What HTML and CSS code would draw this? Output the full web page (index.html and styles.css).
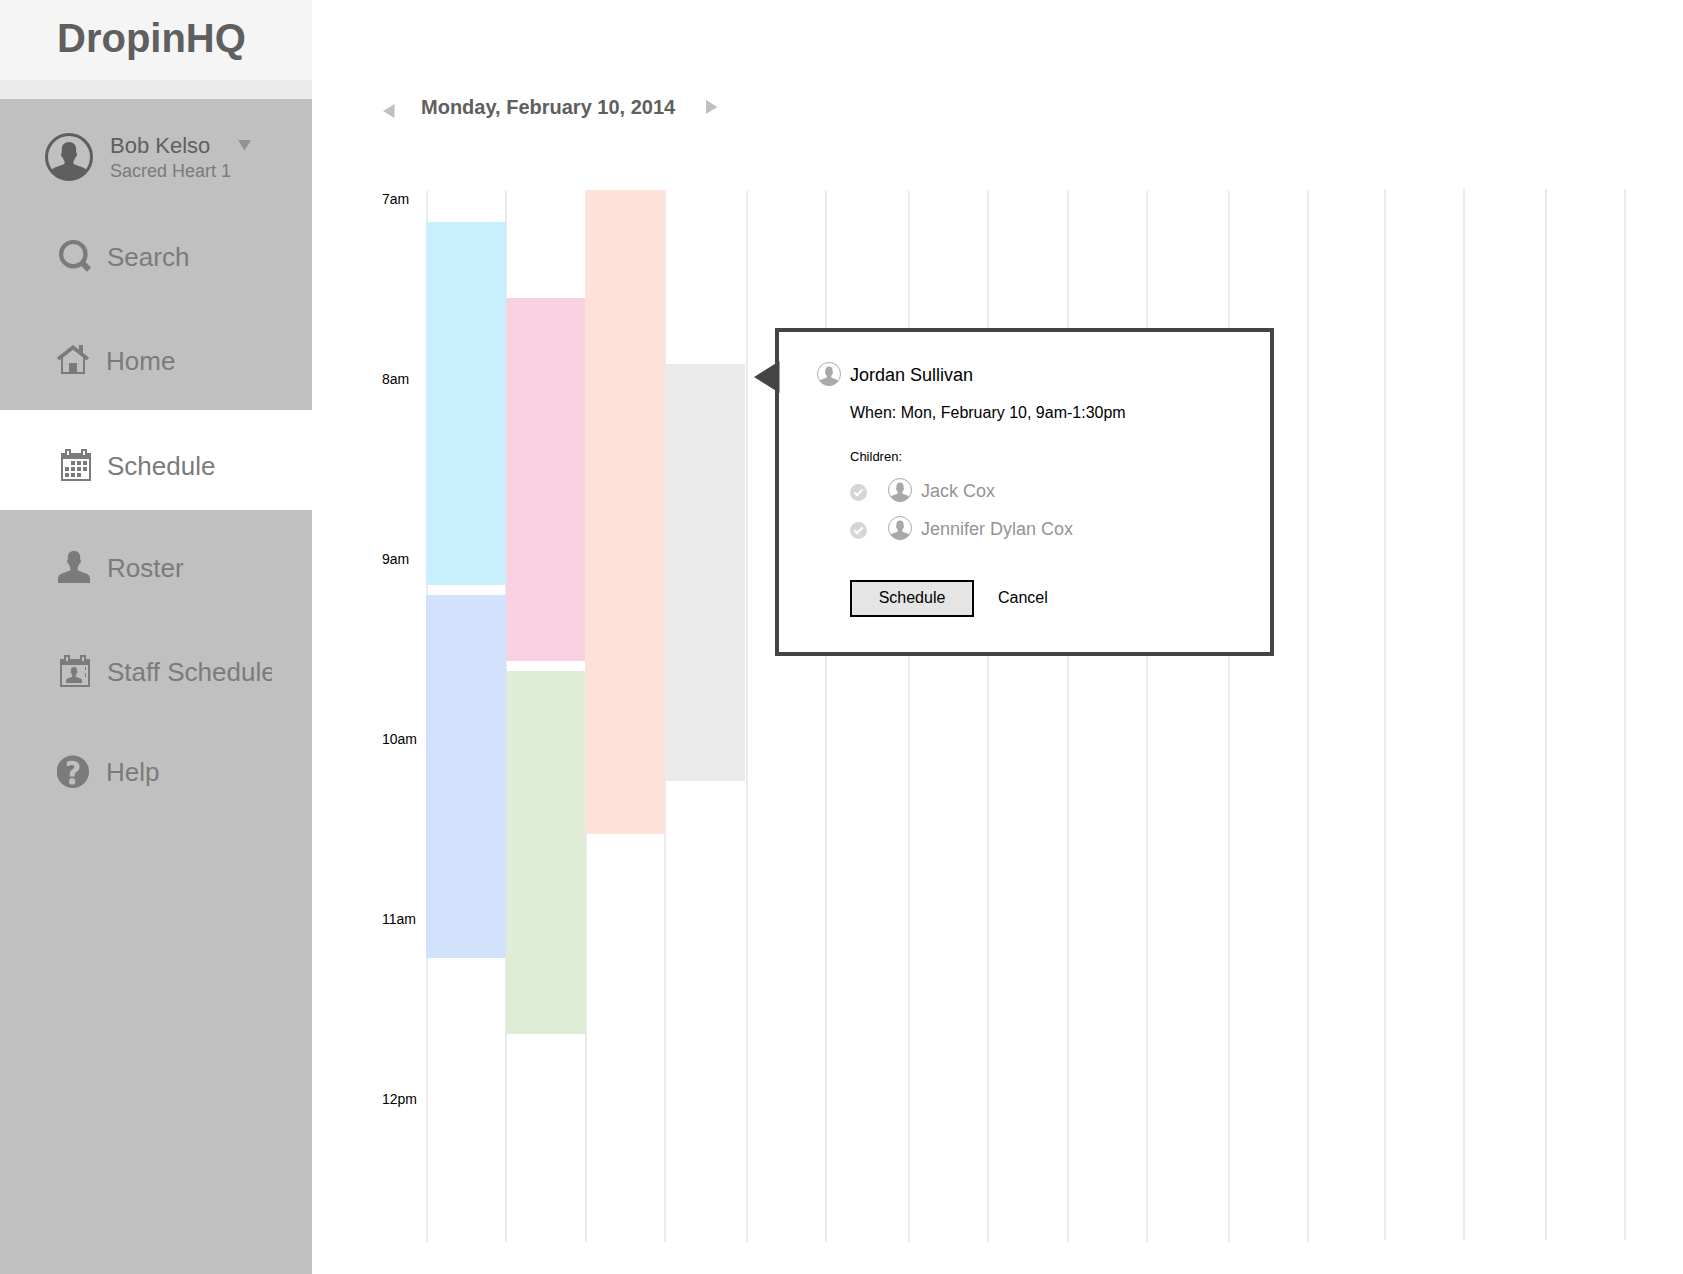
FILE: index.html
```html
<!DOCTYPE html>
<html lang="en">
<head>
  <meta charset="utf-8">
  <meta name="viewport" content="width=device-width, initial-scale=1">
  <title>DropinHQ – Schedule</title>
  <link rel="stylesheet" href="styles.css">
</head>
<body>
  <svg class="sprite" aria-hidden="true">
    <symbol id="person" viewBox="0 0 32 32">
      <path d="M16 0C20 0 22.3 2.4 22.2 6.5L22.1 8.4C23 8.4 23 9.5 22.8 10.7C22.5 12.2 22 12.9 21.2 13C20.9 14.5 20.2 15.6 19.6 16.4V18.8C19.7 19.5 20.2 19.7 21.2 20.1L28 22.6C31 23.8 32 25 32 28.5V32H0V28.5C0 25 1 23.8 4 22.6L10.8 20.1C11.8 19.7 12.3 19.5 12.4 18.8V16.4C11.8 15.6 11.1 14.5 10.8 13C10 12.9 9.5 12.2 9.2 10.7C9 9.5 9 8.4 9.9 8.4L9.8 6.5C9.7 2.4 12 0 16 0Z"/>
    </symbol>
    <clipPath id="face"><circle cx="24" cy="24" r="23"/></clipPath>
    <symbol id="avatar" viewBox="0 0 48 48">
      <g clip-path="url(#face)">
        <path d="M24 9C28.6 9 31.4 12 31.2 17L31.1 19.4C32 19.4 32.1 20.6 31.9 22C31.6 23.6 31 24.4 30.2 24.6C29.8 26.2 29.2 27.4 28.4 28.4V30C28.6 31 29.2 31.4 30.4 31.8L38 34.6C40.6 35.8 42.4 37.2 45 40V48H3V40C5.6 37.2 7.4 35.8 10 34.6L17.6 31.8C18.8 31.4 19.4 31 19.6 30V28.4C18.8 27.4 18.2 26.2 17.8 24.6C17 24.4 16.4 23.6 16.1 22C15.9 20.6 16 19.4 16.9 19.4L16.8 17C16.6 12 19.4 9 24 9Z"/>
      </g>
    </symbol>
  </svg>

  <div class="app">
    <aside class="sidebar">
      <h1 class="brand">DropinHQ</h1>

      <div class="account">
        <svg class="avatar avatar-large" viewBox="0 0 48 48" aria-hidden="true"><use href="#avatar"/><circle class="ring" cx="24" cy="24" r="22.5"/></svg>
        <div class="account-text">
          <div class="account-name">
            <span>Bob Kelso</span>
            <button class="icon-button caret" type="button" aria-label="Account menu">
              <svg width="13" height="11" viewBox="0 0 13 11"><path d="M0 0H13L6.5 10.5Z"/></svg>
            </button>
          </div>
          <div class="account-site">Sacred Heart 1</div>
        </div>
      </div>

      <nav class="nav">
        <a class="nav-item nav-wide" href="#search">
          <svg class="nav-icon" viewBox="0 0 34 34"><circle cx="16.3" cy="14.2" r="12.2" fill="none" stroke="currentColor" stroke-width="4.2"/><path d="M24.8 22.4L32 29.7" stroke="currentColor" stroke-width="6"/></svg>
          <span class="nav-label">Search</span>
        </a>
        <a class="nav-item" href="#home">
          <svg class="nav-icon" viewBox="0 0 34 34"><path d="M16 1L22 5.8V1H26V8.8L32 13.4L29.8 16.4L16 5.7L2.2 16.4L0 13.4Z"/><path d="M4 14L6 12.8V28H12V19H20V28H26V12.8L28 14V30H4Z"/></svg>
          <span class="nav-label">Home</span>
        </a>
        <a class="nav-item nav-wide nav-compact nav-active" href="#schedule" aria-current="page">
          <svg class="nav-icon" viewBox="0 0 34 34"><path fill-rule="evenodd" d="M4 4H8V0H14V4H24V0H30V4H34V32H4ZM10 2V6H12V2ZM26 2V6H28V2ZM6 10V30H32V10Z"/><path d="M14 12h4v4h-4zM20 12h4v4h-4zM26 12h4v4h-4zM8 18h4v4h-4zM14 18h4v4h-4zM20 18h4v4h-4zM26 18h4v4h-4zM8 24h4v4h-4zM14 24h4v4h-4zM20 24h4v4h-4z"/></svg>
          <span class="nav-label">Schedule</span>
        </a>
        <a class="nav-item nav-wide nav-lower" href="#roster">
          <svg class="nav-icon" viewBox="0 0 34 34"><use href="#person" x="1" y="0" width="32" height="32"/></svg>
          <span class="nav-label">Roster</span>
        </a>
        <a class="nav-item nav-wide nav-lower nav-compact" href="#staff">
          <svg class="nav-icon" viewBox="0 0 34 34"><path fill-rule="evenodd" d="M3 4H7V0H13V4H23V0H29V4H33V32H3ZM9 2V6H11V2ZM25 2V6H27V2ZM5 10V30H31V10Z"/><use href="#person" x="9" y="12" width="16" height="16"/><path d="M28 12h1v3h-1zM28 18h1v4h-1z"/></svg>
          <span class="nav-label">Staff Schedule</span>
        </a>
        <a class="nav-item nav-lower" href="#help">
          <svg class="nav-icon" viewBox="0 0 34 34"><circle cx="15.8" cy="16.7" r="16.2"/><g class="cutout"><path d="M10 6.9C14 5 22.6 5.2 22.6 11.8C22.6 17 17.6 16.6 17.6 20V21.6H12.8V19C12.8 14.6 17.4 14.6 17.4 11.8C17.4 9.6 14 9.4 11.2 11.2L9.6 10.6Z"/><circle cx="15.2" cy="26.4" r="3.2"/></g></svg>
          <span class="nav-label">Help</span>
        </a>
      </nav>
    </aside>

    <main class="main">
      <header class="day-bar">
        <button class="icon-button day-prev" type="button" aria-label="Previous day">
          <svg width="13" height="14" viewBox="0 0 13 14"><path d="M12.5 0V14L1 7Z"/></svg>
        </button>
        <h2 class="day-title">Monday, February 10, 2014</h2>
        <button class="icon-button day-next" type="button" aria-label="Next day">
          <svg width="12" height="14" viewBox="0 0 12 14"><path d="M0 0V14L11.5 7Z"/></svg>
        </button>
      </header>

      <div class="board">
        <ol class="hours">
          <li>7am</li><li>8am</li><li>9am</li><li>10am</li><li>11am</li><li>12pm</li>
        </ol>
        <div class="lanes">
          <div class="lane">
            <div class="booking booking-sky" style="margin-top:31px;height:363px"></div>
            <div class="booking booking-blue" style="margin-top:10px;height:363px"></div>
          </div>
          <div class="lane">
            <div class="booking booking-pink" style="margin-top:107px;height:363px"></div>
            <div class="booking booking-green" style="margin-top:10px;height:363px"></div>
          </div>
          <div class="lane">
            <div class="booking booking-peach" style="margin-top:-1px;height:644px"></div>
          </div>
          <div class="lane">
            <div class="booking booking-draft" style="margin-top:173px;height:417px"></div>
          </div>
          <div class="lane"></div><div class="lane"></div><div class="lane"></div><div class="lane"></div>
          <div class="lane"></div><div class="lane"></div><div class="lane"></div><div class="lane"></div>
          <div class="lane"></div><div class="lane"></div><div class="lane"></div><div class="lane"></div>
        </div>

        <form class="popover" aria-label="New booking">
          <svg class="popover-arrow" width="26" height="32" viewBox="0 0 26 32" aria-hidden="true"><path d="M0 16L25.5 0V32Z"/></svg>
          <div class="parent">
            <svg class="avatar" viewBox="0 0 48 48" aria-hidden="true"><use href="#avatar"/><circle class="ring" cx="24" cy="24" r="23"/></svg>
            <span>Jordan Sullivan</span>
          </div>
          <div class="details">
            <p class="when">When: Mon, February 10, 9am-1:30pm</p>
            <fieldset class="children">
              <legend>Children:</legend>
              <div class="child">
                <input type="checkbox" id="jack" checked>
                <label for="jack"><svg class="avatar" viewBox="0 0 48 48" aria-hidden="true"><use href="#avatar"/><circle class="ring" cx="24" cy="24" r="23"/></svg>Jack Cox</label>
              </div>
              <div class="child">
                <input type="checkbox" id="jennifer" checked>
                <label for="jennifer"><svg class="avatar" viewBox="0 0 48 48" aria-hidden="true"><use href="#avatar"/><circle class="ring" cx="24" cy="24" r="23"/></svg>Jennifer Dylan Cox</label>
              </div>
            </fieldset>
            <div class="actions">
              <button class="button-primary" type="button">Schedule</button>
              <button class="button-plain" type="button">Cancel</button>
            </div>
          </div>
        </form>
      </div>
    </main>
  </div>
</body>
</html>
```

FILE: styles.css
```css
*,
*::before,
*::after {
  box-sizing: border-box;
}

body {
  margin: 0;
  background: #fff;
  color: #000;
  font: 16px/20px "Liberation Sans", Arial, sans-serif;
}

h1,
h2,
p,
ol,
fieldset,
legend {
  margin: 0;
  padding: 0;
  border: 0;
}

button {
  margin: 0;
  padding: 0;
  border: 0;
  background: none;
  color: inherit;
  font: inherit;
  cursor: pointer;
}

svg {
  display: block;
  flex: none;
  fill: currentColor;
}

.sprite {
  position: absolute;
  width: 0;
  height: 0;
}

.app {
  display: flex;
  min-height: 100vh;
}

/* Sidebar */

.sidebar {
  flex: 0 0 312px;
  min-width: 0;
  background: #c0c0c0;
  color: #7b7b7b;
}

.brand {
  height: 99px;
  padding: 15px 0 0 57px;
  border-bottom: 19px solid #eaeaea;
  background: #f5f5f5;
  color: #5f5f5f;
  font-size: 40px;
  line-height: 46px;
}

.account {
  display: flex;
  gap: 17px;
  padding: 34px 0 18px 45px;
}

.avatar {
  width: 24px;
  height: 24px;
  color: #a9a9a9;
}

.ring {
  fill: none;
  stroke: currentColor;
  stroke-width: 2;
}

.avatar-large {
  width: 48px;
  height: 48px;
  color: #5f5f5f;
}

.avatar-large .ring {
  stroke-width: 3;
}

.account-name {
  display: flex;
  align-items: center;
  gap: 28px;
  color: #5f5f5f;
  font-size: 22px;
  line-height: 25px;
}

.account-site {
  font-size: 18px;
  line-height: 26px;
}

.caret {
  color: #929292;
}

.nav-item {
  display: flex;
  align-items: flex-start;
  gap: 15px;
  height: 104px;
  padding: 38px 40px 0 57px;
  color: inherit;
  font-size: 26px;
  line-height: 34px;
  text-decoration: none;
}

.nav-wide {
  gap: 16px;
}

.nav-compact {
  height: 100px;
}

.nav-active {
  padding-top: 39px;
  background: #fff;
}

.nav-lower {
  padding-top: 41px;
}

.nav-icon {
  width: 34px;
  height: 34px;
}

.nav-label {
  overflow: hidden;
  white-space: nowrap;
}

.cutout {
  fill: #c0c0c0;
}

/* Day view */

.main {
  display: flex;
  flex: 1;
  flex-direction: column;
  gap: 73px;
  min-width: 0;
  padding: 96px 57px 32px 70px;
}

.day-bar {
  display: flex;
  align-items: center;
  height: 22px;
}

.day-bar .icon-button {
  color: #c0c0c0;
}

.day-bar .day-prev {
  align-self: flex-end;
}

.day-title {
  margin: 0 31px 0 26px;
  color: #5f5f5f;
  font-size: 20px;
  line-height: 22px;
}

.board {
  display: flex;
  flex: 1;
  position: relative;
}

.hours {
  width: 44px;
  list-style: none;
  font-size: 14px;
  line-height: 16px;
}

.hours li {
  height: 180px;
}

.hours li:last-child {
  height: auto;
}

.lanes {
  display: grid;
  flex: 1;
  grid-template-columns:
    79fr 80fr 79fr 82fr 79fr 83fr 79fr 80fr 79fr
    82fr 79fr 77fr 79fr 82fr 79fr 2px;
}

.lane {
  display: flex;
  flex-direction: column;
  border-left: 2px solid #eaeaea;
}

.lane:nth-child(n + 13) {
  margin: -2px 0 2px;
}

.booking {
  z-index: 1;
  margin: 0 -1px 0 -2px;
}

.lane:nth-child(2) .booking {
  margin-left: -1px;
}

.booking-sky { background: #c8effe; }
.booking-blue { background: #d3e2fc; }
.booking-pink { background: #fad1e0; }
.booking-green { background: #dfecd6; }
.booking-peach { background: #fee2d7; }

.booking-draft {
  margin-right: 1px;
  margin-left: 0;
  background: #eaeaea;
}

/* Booking popover */

.popover {
  position: absolute;
  top: 137px;
  left: 393px;
  z-index: 2;
  width: 499px;
  padding: 30px 38px 35px;
  border: 4px solid #444;
  background: #fff;
}

.popover-arrow {
  position: absolute;
  top: 29px;
  left: -25px;
  color: #444;
}

.parent {
  display: flex;
  gap: 9px;
  font-size: 18px;
  line-height: 26px;
}

.details {
  padding: 15px 0 0 33px;
}

.children {
  margin-top: 26px;
}

.children legend {
  margin-bottom: 13px;
  font-size: 13px;
  line-height: 16px;
}

.child {
  display: flex;
  gap: 21px;
  margin-bottom: 12px;
}

.child input {
  flex: none;
  width: 17px;
  height: 17px;
  margin: 6px 0 0;
  border-radius: 50%;
  appearance: none;
  background: #d6d6d6;
}

.child input:checked::after {
  content: "";
  display: block;
  width: 9px;
  height: 5px;
  margin: 5px 0 0 4px;
  border: solid #fff;
  border-width: 0 0 2px 2px;
  transform: rotate(-45deg);
}

.child label {
  display: flex;
  gap: 9px;
  color: #949494;
  font-size: 18px;
  line-height: 26px;
}

.actions {
  display: flex;
  gap: 24px;
  margin-top: 26px;
}

.actions button {
  height: 37px;
  padding-bottom: 2px;
}

.actions .button-primary {
  width: 124px;
  border: 2px solid #000;
  background: #e5e5e5;
}
```
